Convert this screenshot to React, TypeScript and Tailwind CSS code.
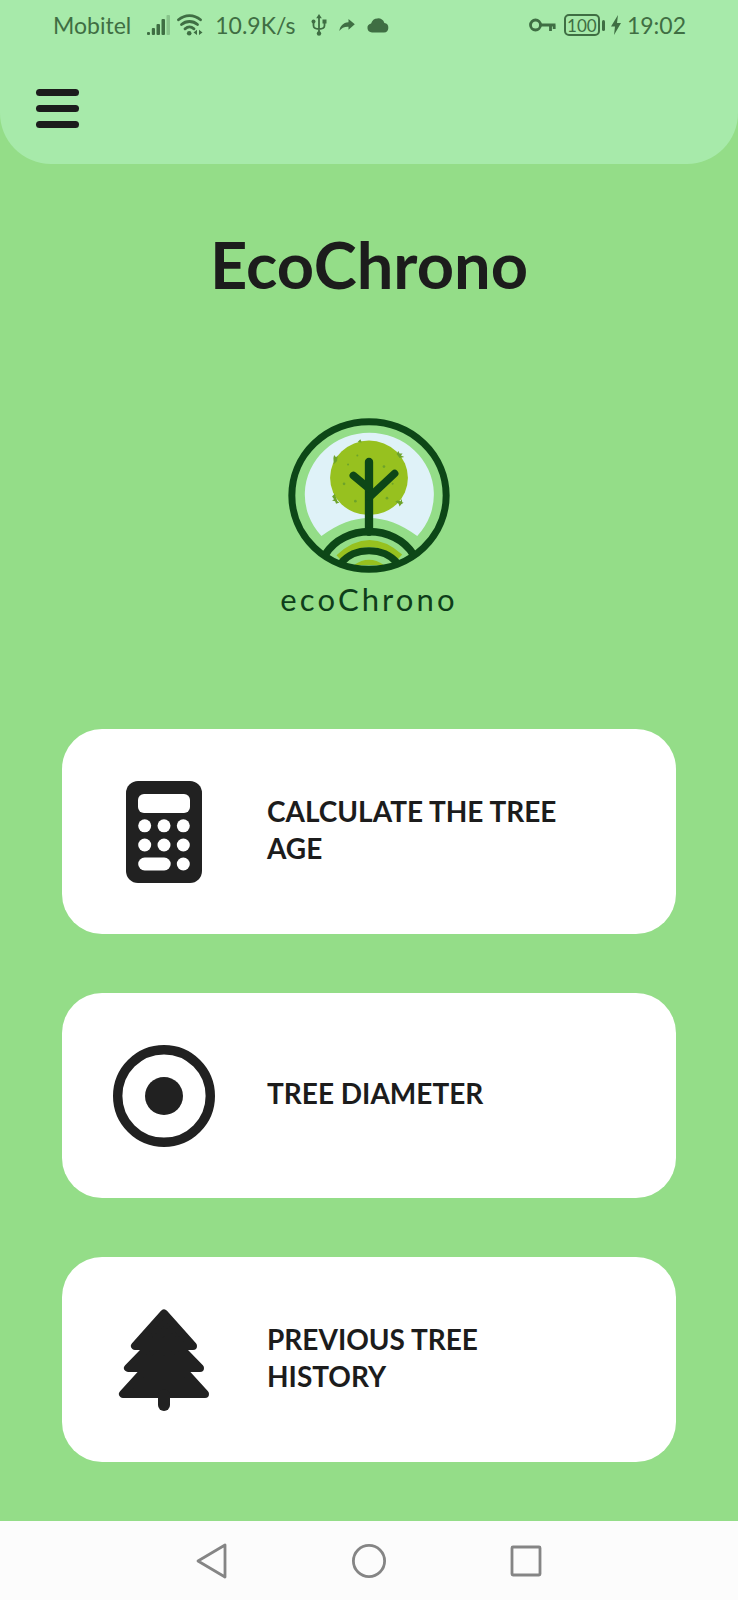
import type { ReactNode } from "react";

function SignalIcon() {
  return (
    <svg viewBox="0 0 24 22" className="h-[22px] w-6" fill="currentColor" aria-hidden="true">
      <rect x="0" y="18" width="3" height="3" rx="1" />
      <rect x="4.800" y="14" width="3.200" height="7" rx="1" />
      <rect x="9.500" y="10" width="3.500" height="11" rx="1" />
      <rect x="14.500" y="5" width="3.500" height="16" rx="1" />
      <rect x="19.500" y="1" width="3.500" height="20" rx="1" opacity="0.3" />
    </svg>
  );
}

function WifiIcon() {
  return (
    <svg viewBox="0 0 26 22" className="h-[22px] w-[26px]" fill="none" stroke="currentColor" strokeWidth="2.800" strokeLinecap="round" aria-hidden="true">
      <path d="M1.500 5.800C8 .2 17 .2 23.500 5.800" />
      <path d="M4.500 10.500C9 6.500 16 6.500 20.500 10.500" />
      <path d="M8 14.800c3-2.500 6-2.500 9 0" />
      <circle cx="12.200" cy="19.300" r="2.300" fill="currentColor" stroke="none" />
      <path d="M20 15.800v5.200l-3.500-2.600zM22 15.800v5.200l3.500-2.600z" fill="currentColor" stroke="none" />
    </svg>
  );
}

function UsbIcon() {
  return (
    <svg viewBox="0 0 16 22" className="h-[22px] w-4" fill="none" stroke="currentColor" strokeWidth="1.800" aria-hidden="true">
      <path d="M8 3v16M2.500 8v3.500c0 2 2 3.500 5.500 3.500s5.500-1.500 5.500-3.500V8" />
      <path d="M8 0l2.800 4.200H5.200z" fill="currentColor" stroke="none" />
      <circle cx="8" cy="19.500" r="2.200" fill="currentColor" stroke="none" />
      <circle cx="2.500" cy="7.500" r="2" fill="currentColor" stroke="none" />
      <rect x="11.500" y="5.500" width="4" height="4" fill="currentColor" stroke="none" />
    </svg>
  );
}

function ShareIcon() {
  return (
    <svg viewBox="0 0 16 14" className="h-[14px] w-4" fill="currentColor" aria-hidden="true">
      <path d="M9.500 1l6.300 5.300-6.300 5.400V8.700C5.500 8.500 2.500 9.800.3 13 1 8 4 4.600 9.500 4.200z" />
    </svg>
  );
}

function CloudIcon() {
  return (
    <svg viewBox="0 0 22 16" className="h-4 w-[22px]" fill="currentColor" aria-hidden="true">
      <path d="M5 15.500a4.600 4.600 0 0 1-.9-9.100A7 7 0 0 1 17.400 6 4.800 4.800 0 0 1 17 15.500z" />
    </svg>
  );
}

function KeyIcon() {
  return (
    <svg viewBox="0 0 27 14" className="h-[14px] w-[27px]" fill="none" stroke="currentColor" strokeWidth="2.800" aria-hidden="true">
      <circle cx="6.500" cy="7" r="5" />
      <path d="M11.500 7H26.500M21.500 7v6M25.200 7v4" />
    </svg>
  );
}

function Battery() {
  return (
    <span className="flex items-center gap-[2px]">
      <span className="flex h-[22px] w-9 items-center justify-center rounded-[5px] border-2 border-[#3f6e43] text-[17px] leading-none">
        100
      </span>
      <span className="h-[11px] w-[3px] rounded-sm bg-[#3f6e43]" />
    </span>
  );
}

function BoltIcon() {
  return (
    <svg viewBox="0 0 10 20" className="h-5 w-[10px]" fill="currentColor" aria-hidden="true">
      <path d="M7 0L0 11.500h4L3 20l7-12H6z" />
    </svg>
  );
}

function StatusBar() {
  return (
    <div className="flex h-[50px] items-center justify-between pr-[52px] pl-[53px] text-[23px] text-[#3f6e43]">
      <div className="flex items-center gap-3">
        <div className="flex items-center gap-4">
          <span>Mobitel</span>
          <span className="flex items-center gap-1.5">
            <SignalIcon />
            <WifiIcon />
          </span>
        </div>
        <div className="flex items-center gap-4">
          <span>10.9K/s</span>
          <span className="flex items-center gap-3">
            <UsbIcon />
            <ShareIcon />
            <CloudIcon />
          </span>
        </div>
      </div>
      <div className="flex items-center gap-1.5">
        <span className="flex items-center gap-2">
          <KeyIcon />
          <Battery />
        </span>
        <BoltIcon />
        <span>19:02</span>
      </div>
    </div>
  );
}

function Logo() {
  return (
    <svg viewBox="50 38 486 466" className="h-[155px] w-[162px]" fill="none" aria-hidden="true">
      <path d="M150 393A194 186 0 1 1 438 393Q293 284 150 393Z" fill="#dff2f8" />
      <ellipse cx="293" cy="218" rx="117" ry="112" fill="#97c11f" />
      <g fill="#6da32a">
        <path d="M259 110l8-8 4 10zM186 158l2-9 6 7 5-5-2 16-10 10zM376 146l5-9 4 8 9 0-5 6 10 4-14 3zM182 274l8-8 8 22 6 4-10 4-3-8-9-2 6-4zM372 290l6-4 10 2 3-7 2 10 4 2-7 4-5 7-3-8z" />
        <circle cx="258" cy="151" r="3" />
        <circle cx="338" cy="184" r="4" />
        <circle cx="230" cy="178" r="3" />
        <circle cx="218" cy="236" r="4" />
        <circle cx="347" cy="279" r="4" />
        <circle cx="252" cy="288" r="4" />
        <circle cx="364" cy="236" r="3" />
      </g>
      <g stroke="#0d4717" strokeLinecap="round">
        <path d="M293 170V380" strokeWidth="25" />
        <path d="M246 211L293 250M370 205L295 275" strokeWidth="23" />
      </g>
      <path d="M202 458Q293 374 386 456" stroke="#97c11f" strokeWidth="20" />
      <path d="M248 480Q293 448 338 480Z" fill="#97c11f" />
      <g stroke="#0d4717">
        <path d="M162 448C218 357 370 357 426 448" strokeWidth="23" />
        <path d="M209 474C250 425 336 425 378 474" strokeWidth="21" />
        <ellipse cx="293" cy="271" rx="232" ry="222" strokeWidth="21" />
      </g>
    </svg>
  );
}

function CalculatorIcon() {
  return (
    <svg viewBox="0 0 102 102" className="size-[102px] shrink-0" aria-hidden="true">
      <rect x="13" y="0" width="76" height="102" rx="12" fill="#212121" />
      <g fill="#fff">
        <rect x="25" y="13" width="52" height="19" rx="6" />
        <circle cx="31.700" cy="44.800" r="6.500" />
        <circle cx="51" cy="44.800" r="6.500" />
        <circle cx="70.300" cy="44.800" r="6.500" />
        <circle cx="31.700" cy="64" r="6.500" />
        <circle cx="51" cy="64" r="6.500" />
        <circle cx="70.300" cy="64" r="6.500" />
        <rect x="25.200" y="76.500" width="32.500" height="13" rx="6.500" />
        <circle cx="70.300" cy="83" r="6.500" />
      </g>
    </svg>
  );
}

function DiameterIcon() {
  return (
    <svg viewBox="0 0 102 102" className="size-[102px] shrink-0" aria-hidden="true">
      <circle cx="51" cy="51" r="46.300" fill="none" stroke="#212121" strokeWidth="9.400" />
      <circle cx="51" cy="51" r="19" fill="#212121" />
    </svg>
  );
}

function TreeIcon() {
  return (
    <svg viewBox="0 0 102 102" className="size-[102px] shrink-0" fill="#212121" stroke="#212121" strokeWidth="8" strokeLinejoin="round" aria-hidden="true">
      <path d="M51 4.500L22 37H80ZM51 22L15 59H87ZM51 40L10 85H92Z" />
      <rect x="45" y="80" width="12" height="22" rx="6" stroke="none" />
    </svg>
  );
}

function MenuCard({ icon, label }: { icon: ReactNode; label: string }) {
  return (
    <button
      type="button"
      className="flex min-h-[205px] w-full items-center gap-[52px] rounded-[40px] bg-white pr-[98px] pl-[51px] text-left text-[28px] leading-[37px] font-bold text-[#1c1c1c]"
    >
      {icon}
      <span className="pb-1">{label}</span>
    </button>
  );
}

export default function App() {
  return (
    <div className="flex min-h-screen flex-col bg-[#94dd88] font-['Lato',sans-serif]">
      <header className="rounded-b-[51px] bg-[#a7eaaa] pb-[34px]">
        <StatusBar />
        <button type="button" aria-label="Open menu" className="mt-9 ml-9 flex h-11 w-[43px] flex-col items-center justify-center gap-[9px]">
          <span className="h-[7px] w-full rounded-full bg-[#1c1c1c]" />
          <span className="h-[7px] w-full rounded-full bg-[#1c1c1c]" />
          <span className="h-[7px] w-full rounded-full bg-[#1c1c1c]" />
        </button>
      </header>

      <main className="flex flex-1 flex-col items-center px-[62px] pt-16 pb-[59px]">
        <h1 className="text-[65px] leading-[72px] font-bold text-[#1c1c1c]">EcoChrono</h1>
        <div className="mt-[118px] flex flex-col items-center gap-1.5">
          <Logo />
          <p className="text-[31px] leading-10 tracking-widest text-[#0e3d1a]">ecoChrono</p>
        </div>
        <nav aria-label="Tools" className="mt-auto flex w-full flex-col gap-[59px]">
          <MenuCard icon={<CalculatorIcon />} label="CALCULATE THE TREE AGE" />
          <MenuCard icon={<DiameterIcon />} label="TREE DIAMETER" />
          <MenuCard icon={<TreeIcon />} label="PREVIOUS TREE HISTORY" />
        </nav>
      </main>

      <footer className="flex h-[79px] items-center justify-center gap-[121px] bg-[#fcfcfc] text-[#858585]">
        <button type="button" aria-label="Back">
          <svg viewBox="0 0 36 36" className="size-9" fill="none" stroke="currentColor" strokeWidth="2.800" strokeLinejoin="round">
            <path d="M31 2V34L4 18Z" />
          </svg>
        </button>
        <button type="button" aria-label="Home">
          <svg viewBox="0 0 36 36" className="size-9" fill="none" stroke="currentColor" strokeWidth="2.800">
            <circle cx="18" cy="18" r="15.600" />
          </svg>
        </button>
        <button type="button" aria-label="Recent apps">
          <svg viewBox="0 0 36 36" className="size-9" fill="none" stroke="currentColor" strokeWidth="2.800">
            <rect x="4" y="4" width="28" height="28" rx="1" />
          </svg>
        </button>
      </footer>
    </div>
  );
}
